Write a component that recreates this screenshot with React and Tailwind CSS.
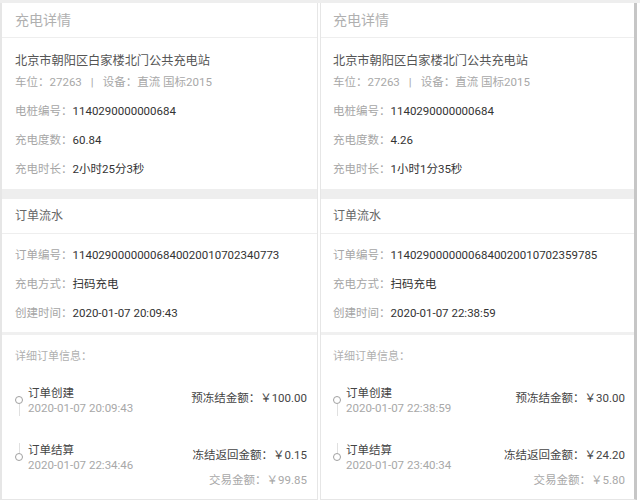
const orders = [
  {
    degree: "60.84",
    duration: "2小时25分3秒",
    orderNo: "11402900000006840020010702340773",
    created: "2020-01-07 20:09:43",
    settled: "2020-01-07 22:34:46",
    frozen: "￥100.00",
    refund: "￥0.15",
    amount: "￥99.85",
    panel: "border-l-2 border-r border-l-[#e6e6e6] border-r-[#e6e6e6] w-[318px]",
    inner: "pl-[13px] pr-[10px]",
  },
  {
    degree: "4.26",
    duration: "1小时1分35秒",
    orderNo: "11402900000006840020010702359785",
    created: "2020-01-07 22:38:59",
    settled: "2020-01-07 23:40:34",
    frozen: "￥30.00",
    refund: "￥24.20",
    amount: "￥5.80",
    panel: "border-l border-r-[3px] border-l-[#e6e6e6] border-r-[#c6c6c6] w-[317px] ml-[2px]",
    inner: "pl-[12px] pr-[9px]",
  },
];

function Row({ label, value }) {
  return (
    <div className="flex h-[29px] items-center text-[11.5px]">
      <span className="text-[#a6a6a6]">{label}：</span>
      <span className="text-[#333333]">{value}</span>
    </div>
  );
}

function Dot() {
  return <div className="h-[8px] w-[8px] shrink-0 rounded-full border-[1.5px] border-[#a0a0a0] bg-white" />;
}

function Panel({ o }) {
  return (
    <div className={`flex flex-col border-b border-b-[#e6e6e6] ${o.panel}`}>
      <div className={`flex h-[35px] items-center border-b border-[#eeeeee] text-[14px] text-[#b0b0b0] ${o.inner}`}>
        充电详情
      </div>
      <div className={`pt-[14px] pb-[5px] ${o.inner}`}>
        <div className="h-[18px] text-[12.2px] leading-[18px] text-[#555555]">北京市朝阳区白家楼北门公共充电站</div>
        <div className="mt-[4px] flex h-[18px] items-center text-[11.5px] text-[#a8a8a8]">
          <span>车位：27263</span>
          <span className="mx-[9px]">|</span>
          <span>设备：直流 国标2015</span>
        </div>
        <div className="mt-[5px]">
          <Row label="电桩编号" value="1140290000000684" />
          <Row label="充电度数" value={o.degree} />
          <Row label="充电时长" value={o.duration} />
        </div>
      </div>
      <div className="h-[10px] bg-[#eeeeee]" />
      <div className={`flex h-[35px] items-center border-b border-[#eeeeee] text-[12px] text-[#666666] ${o.inner}`}>
        订单流水
      </div>
      <div className={`pt-[7px] pb-[4px] ${o.inner}`}>
        <Row label="订单编号" value={o.orderNo} />
        <Row label="充电方式" value="扫码充电" />
        <Row label="创建时间" value={o.created} />
      </div>
      <div className="h-[3px] bg-[#f0f0f0]" />
      <div className={`pt-[14px] pb-[11px] ${o.inner}`}>
        <div className="h-[16px] text-[11px] leading-[16px] text-[#b0b0b0]">详细订单信息：</div>
        <div className="mt-[21px] flex flex-col">
          <div className="flex items-stretch pb-[27px]">
            <div className="flex w-[8px] shrink-0 flex-col items-center">
              <div className="h-[10px] shrink-0" />
              <Dot />
              <div className="w-px flex-1 bg-[#e0e0e0]" />
            </div>
            <div className="ml-[5px] flex flex-col text-[11.5px] leading-[15px]">
              <span className="text-[#444444]">订单创建</span>
              <span className="text-[#a8a8a8]">{o.created}</span>
            </div>
            <div className="flex-1" />
            <div className="pt-[4px] text-[11.5px] leading-[16px] text-[#444444]">预冻结金额：{o.frozen}</div>
          </div>
          <div className="flex items-start">
            <div className="flex w-[8px] shrink-0 flex-col items-center">
              <div className="h-[10px] w-px shrink-0 bg-[#e0e0e0]" />
              <Dot />
            </div>
            <div className="ml-[5px] flex flex-col text-[11.5px] leading-[15px]">
              <span className="text-[#444444]">订单结算</span>
              <span className="text-[#a8a8a8]">{o.settled}</span>
            </div>
            <div className="flex-1" />
            <div className="flex flex-col items-end pt-[4px] text-[11.5px] leading-[16px]">
              <span className="text-[#444444]">冻结返回金额：{o.refund}</span>
              <span className="mt-[9px] text-[#a8a8a8]">交易金额：{o.amount}</span>
            </div>
          </div>
        </div>
      </div>
    </div>
  );
}

export default function App() {
  return (
    <div
      className="h-[504px] w-[640px] overflow-hidden bg-white"
      style={{ fontFamily: 'Roboto, "Noto Sans CJK SC", sans-serif' }}
    >
      <div className="h-[3px] bg-[#eeeeee]" />
      <div className="flex">
        {orders.map((o) => (
          <Panel key={o.orderNo} o={o} />
        ))}
      </div>
    </div>
  );
}
